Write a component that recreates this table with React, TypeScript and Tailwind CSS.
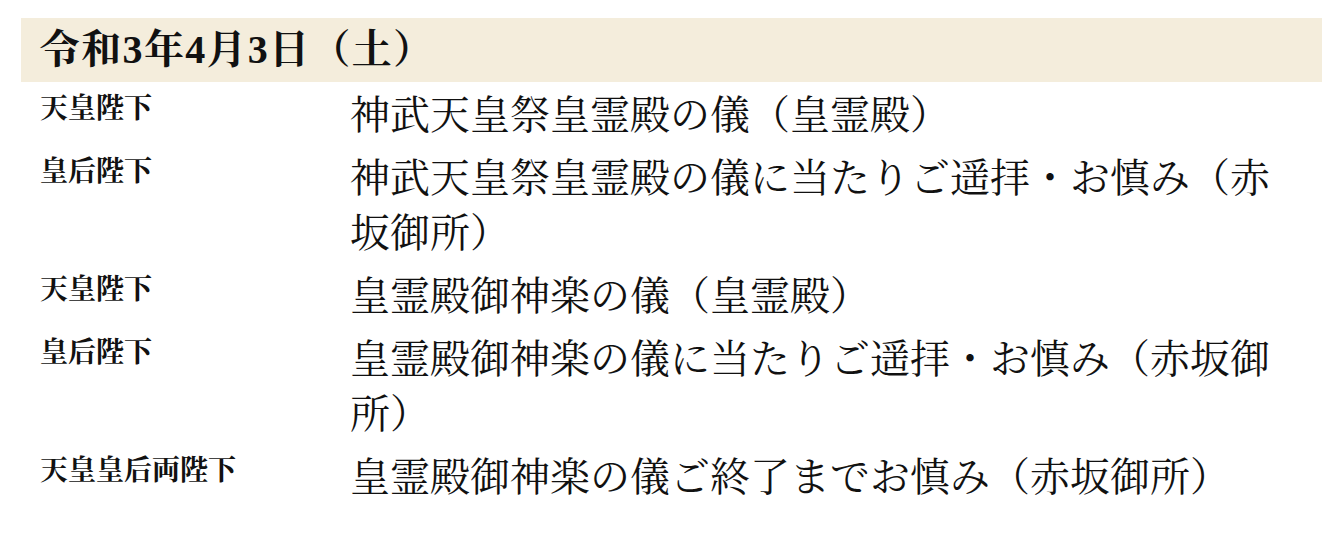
import React from 'react';

interface ScheduleItem {
  who: string;
  what: string;
}

const items: ScheduleItem[] = [
  { who: '天皇陛下', what: '神武天皇祭皇霊殿の儀（皇霊殿）' },
  { who: '皇后陛下', what: '神武天皇祭皇霊殿の儀に当たりご遥拝・お慎み（赤坂御所）' },
  { who: '天皇陛下', what: '皇霊殿御神楽の儀（皇霊殿）' },
  { who: '皇后陛下', what: '皇霊殿御神楽の儀に当たりご遥拝・お慎み（赤坂御所）' },
  { who: '天皇皇后両陛下', what: '皇霊殿御神楽の儀ご終了までお慎み（赤坂御所）' },
];

const serif = {
  fontFamily: '"Liberation Serif", "Noto Serif CJK JP", "Noto Sans CJK JP", serif',
};

export default function App() {
  return (
    <div lang="ja" className="w-[1334px] h-[538px] bg-white text-[#111] pl-[21px] pr-[12px] pt-[18px]" style={serif}>
      {/* Date header */}
      <div className="h-[64px] bg-[#f4eddc] flex items-center pl-[19px]">
        <h2 className="text-[40px] font-bold leading-none tracking-[1.3px]">令和3年4月3日（土）</h2>
      </div>

      {/* Schedule rows */}
      <div className="mt-[6px] flex flex-col gap-[8px]">
        {items.map((item, i) => (
          <div key={i} className="flex items-start pl-[19px]">
            <div className="w-[310px] shrink-0 text-[28px] font-bold leading-[41px]">{item.who}</div>
            <div className="w-[940px] text-[40px] leading-[55px]">{item.what}</div>
          </div>
        ))}
      </div>
    </div>
  );
}
